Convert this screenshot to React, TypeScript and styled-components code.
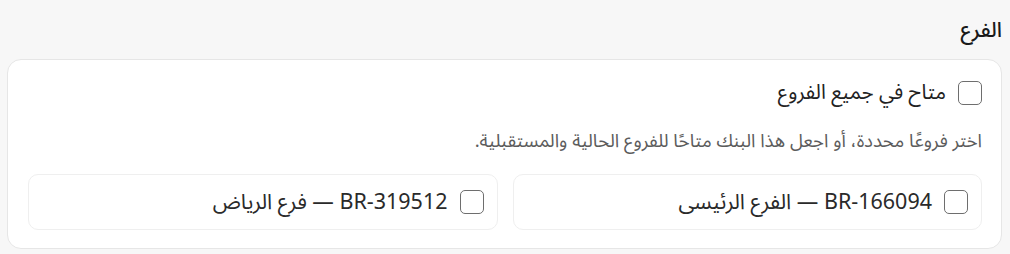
import React from "react";
import styled, { createGlobalStyle } from "styled-components";

const branches = [
  { id: "b1", code: "BR-166094", name: "الفرع الرئيسى" },
  { id: "b2", code: "BR-319512", name: "فرع الرياض" },
];

const GlobalStyle = createGlobalStyle`
  html, body {
    margin: 0;
    padding: 0;
    background: #f7f7f7;
  }
  body {
    font-family: "Noto Sans Arabic", "DejaVu Sans", "Noto Sans", sans-serif;
    color: #1f1f1f;
  }
`;

export default function App() {
  return (
    <>
      <GlobalStyle />
      <Page dir="rtl">
        <SectionTitle>الفرع</SectionTitle>
        <Card>
          <AllRow>
            <Box />
            <AllLabel>متاح في جميع الفروع</AllLabel>
          </AllRow>
          <Hint>
            اختر فروعًا محددة، أو اجعل هذا البنك متاحًا للفروع الحالية والمستقبلية.
          </Hint>
          <BranchGrid>
            {branches.map((b) => (
              <BranchItem key={b.id}>
                <Box />
                <BranchLabel>
                  {b.code} — {b.name}
                </BranchLabel>
              </BranchItem>
            ))}
          </BranchGrid>
        </Card>
      </Page>
    </>
  );
}

const Page = styled.div`
  padding: 14px 8px 0 7px;
  display: flex;
  flex-direction: column;
`;

const SectionTitle = styled.h3`
  margin: 0 0 13px 0;
  font-size: 21px;
  font-weight: 500;
  line-height: 32px;
  color: #1a1a1a;
`;

const Card = styled.div`
  background: #fff;
  border: 1px solid #e6e6e6;
  border-radius: 14px;
  padding: 21px 19px 18px 20px;
  display: flex;
  flex-direction: column;
`;

const AllRow = styled.label`
  display: flex;
  align-items: center;
  gap: 12px;
  height: 24px;
  cursor: pointer;
`;

const Box = styled.span`
  width: 24px;
  height: 24px;
  box-sizing: border-box;
  border: 1.5px solid #6e6e6e;
  border-radius: 5px;
  background: #fff;
  flex-shrink: 0;
`;

const AllLabel = styled.span`
  font-size: 20.5px;
  line-height: 24px;
  color: #222;
`;

const Hint = styled.p`
  margin: 25px 0 20px 0;
  font-size: 18.5px;
  line-height: 24px;
  color: #5c5c5c;
`;

const BranchGrid = styled.div`
  display: grid;
  grid-template-columns: 1fr 1fr;
  gap: 15px;
`;

const BranchItem = styled.label`
  display: flex;
  align-items: center;
  gap: 12px;
  padding: 15px 13px;
  border: 1px solid #efefef;
  border-radius: 10px;
  background: #fff;
  cursor: pointer;
`;

const BranchLabel = styled.span`
  font-size: 21.5px;
  line-height: 24px;
  color: #2a2a2a;
`;
